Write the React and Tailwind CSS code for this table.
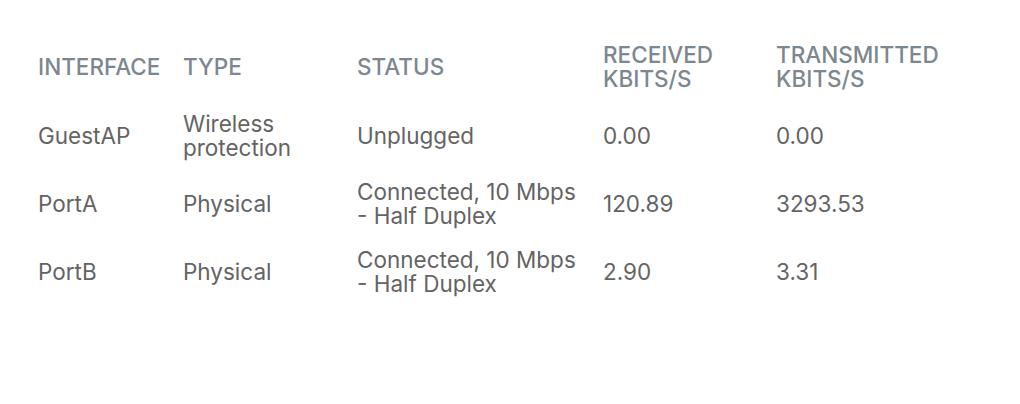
export default function App() {
  const rows = [
    ["GuestAP", ["Wireless", "protection"], ["Unplugged"], "0.00", "0.00"],
    ["PortA", ["Physical"], ["Connected, 10 Mbps", "- Half Duplex"], "120.89", "3293.53"],
    ["PortB", ["Physical"], ["Connected, 10 Mbps", "- Half Duplex"], "2.90", "3.31"],
  ];
  const cols = "grid grid-cols-[145px_174px_246px_173px_200px]";
  return (
    <div className="w-[1020px] h-[404px] bg-white pt-[32px] pl-[38px]" style={{ fontFamily: "Inter, 'Liberation Sans', sans-serif" }}>
      <div className={`${cols} h-[70px] items-center text-[22.5px] leading-[24px] text-[#7c8790] font-medium`}>
        <div>INTERFACE</div>
        <div>TYPE</div>
        <div>STATUS</div>
        <div>RECEIVED<br />KBITS/S</div>
        <div>TRANSMITTED<br />KBITS/S</div>
      </div>
      {rows.map((r, i) => (
        <div key={i} className={`${cols} h-[68px] items-center text-[22.5px] leading-[24px] text-[#646464]`}>
          <div>{r[0]}</div>
          <div>{r[1].map((t, j) => <div key={j}>{t}</div>)}</div>
          <div>{r[2].map((t, j) => <div key={j}>{t}</div>)}</div>
          <div>{r[3]}</div>
          <div>{r[4]}</div>
        </div>
      ))}
    </div>
  );
}
